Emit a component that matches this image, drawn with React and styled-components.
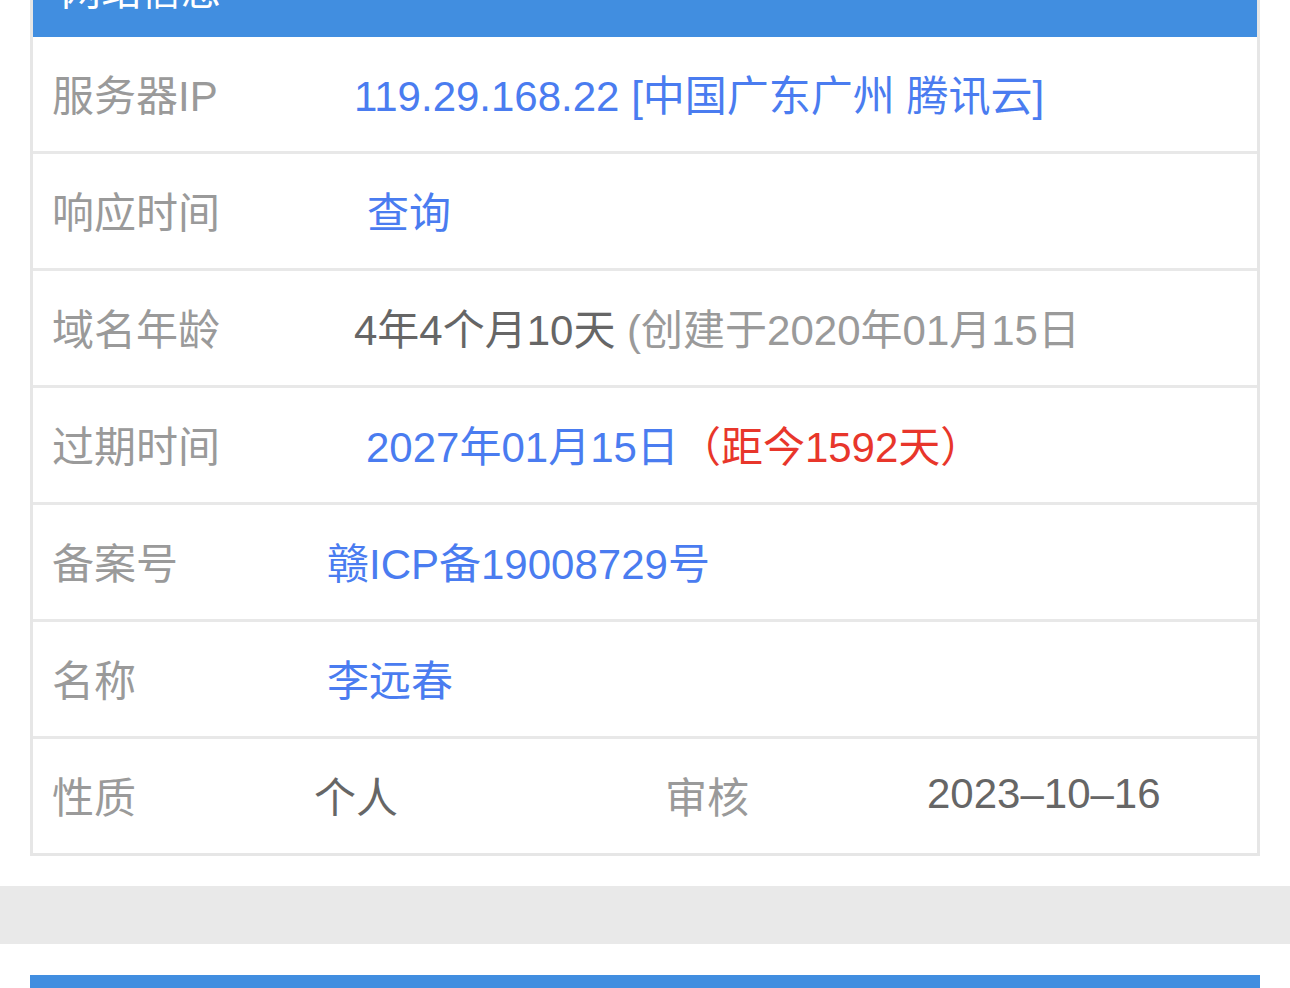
import React from "react";
import styled, { createGlobalStyle } from "styled-components";

const GlobalStyle = createGlobalStyle`
  body {
    margin: 0;
    background: #fff;
    font-family: "Liberation Sans", "Noto Sans CJK SC", sans-serif;
  }
`;

const rows = [
  { label: "服务器IP", offset: 27, parts: [{ text: "119.29.168.22 [中国广东广州 腾讯云]", tone: "blue" }] },
  { label: "响应时间", offset: 40, parts: [{ text: "查询", tone: "blue" }] },
  {
    label: "域名年龄",
    offset: 27,
    parts: [
      { text: "4年4个月10天 ", tone: "dark" },
      { text: "(创建于2020年01月15日", tone: "light" },
    ],
  },
  {
    label: "过期时间",
    offset: 39,
    parts: [
      { text: "2027年01月15日", tone: "blue" },
      { text: "（距今1592天）", tone: "red" },
    ],
  },
  { label: "备案号", offset: 0, parts: [{ text: "赣ICP备19008729号", tone: "blue" }] },
  { label: "名称", offset: 0, parts: [{ text: "李远春", tone: "blue" }] },
];

const tones = {
  blue: "#4a7cf0",
  red: "#e8362b",
  dark: "#666666",
  light: "#9a9a9a",
};

export default function App() {
  return (
    <>
      <GlobalStyle />
      <Page>
        <Card>
          <Header>
            <HeaderTitle>网站信息</HeaderTitle>
          </Header>
          {rows.map((row) => (
            <Row key={row.label}>
              <Label>{row.label}</Label>
              <Value $offset={row.offset}>
                {row.parts.map((p, i) => (
                  <Part key={i} $tone={p.tone}>
                    {p.text}
                  </Part>
                ))}
              </Value>
            </Row>
          ))}
          <SplitRow>
            <Label>性质</Label>
            <Cell $tone="dark">个人</Cell>
            <Cell $tone="light">审核</Cell>
            <Cell $tone="dark">2023–10–16</Cell>
          </SplitRow>
        </Card>
      </Page>
      <Divider />
      <Page>
        <NextHeader />
      </Page>
    </>
  );
}

const Page = styled.div`
  padding: 0 30px;
`;

const Card = styled.div`
  border: 3px solid #e6e6e6;
  border-top: none;
  background: #fff;
`;

const Header = styled.div`
  height: 37px;
  background: #418ee0;
  overflow: hidden;
  padding-left: 28px;
`;

const HeaderTitle = styled.div`
  margin-top: -32px;
  font-size: 40px;
  line-height: 40px;
  color: #fff;
  font-family: "Noto Sans CJK SC", sans-serif;
`;

const Row = styled.div`
  display: flex;
  align-items: center;
  height: 110px;
  padding-bottom: 4px;
  border-bottom: 3px solid #e8e8e8;
  font-size: 42px;
`;

const Label = styled.div`
  width: 275px;
  padding-left: 19px;
  color: #9a9a9a;
  white-space: nowrap;
`;

const Value = styled.div`
  padding-left: ${(p) => p.$offset}px;
  white-space: nowrap;
`;

const Part = styled.span`
  color: ${(p) => tones[p.$tone]};
`;

const SplitRow = styled(Row)`
  display: grid;
  grid-template-columns: 281px 351px 262px 1fr;
  border-bottom: none;
`;

const Cell = styled.div`
  color: ${(p) => tones[p.$tone]};
  white-space: nowrap;
`;

const Divider = styled.div`
  height: 58px;
  margin: 30px 0 31px;
  background: #e9e9e9;
`;

const NextHeader = styled.div`
  height: 40px;
  background: #418ee0;
`;
